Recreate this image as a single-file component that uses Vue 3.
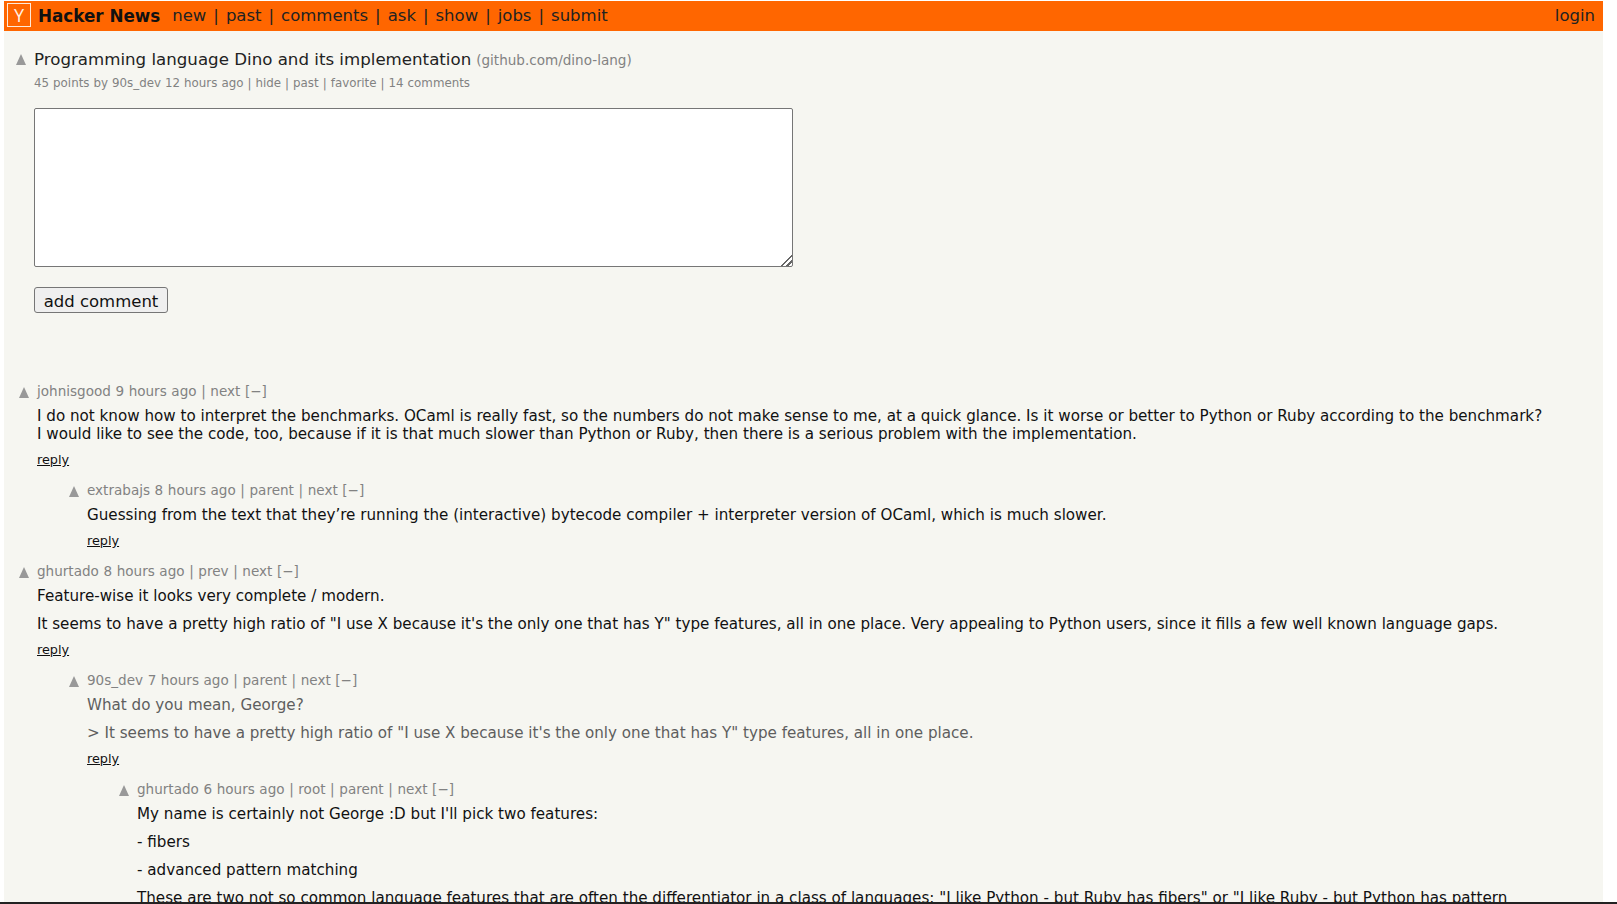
<script setup>
const navLinks = ['new', 'past', 'comments', 'ask', 'show', 'jobs', 'submit']
const subItems = ['hide', 'past', 'favorite', '14 comments']
const comments = [
  { level: 0, user: 'johnisgood', age: '9 hours ago', links: ['next'], paragraphs: ['I do not know how to interpret the benchmarks. OCaml is really fast, so the numbers do not make sense to me, at a quick glance. Is it worse or better to Python or Ruby according to the benchmark? I would like to see the code, too, because if it is that much slower than Python or Ruby, then there is a serious problem with the implementation.'] },
  { level: 1, user: 'extrabajs', age: '8 hours ago', links: ['parent', 'next'], paragraphs: ['Guessing from the text that they’re running the (interactive) bytecode compiler + interpreter version of OCaml, which is much slower.'] },
  { level: 0, user: 'ghurtado', age: '8 hours ago', links: ['prev', 'next'], paragraphs: ['Feature-wise it looks very complete / modern.', 'It seems to have a pretty high ratio of "I use X because it\'s the only one that has Y" type features, all in one place. Very appealing to Python users, since it fills a few well known language gaps.'] },
  { level: 1, user: '90s_dev', age: '7 hours ago', links: ['parent', 'next'], faded: true, paragraphs: ['What do you mean, George?', '> It seems to have a pretty high ratio of "I use X because it\'s the only one that has Y" type features, all in one place.'] },
  { level: 2, user: 'ghurtado', age: '6 hours ago', links: ['root', 'parent', 'next'], paragraphs: ['My name is certainly not George :D but I\'ll pick two features:', '- fibers', '- advanced pattern matching', 'These are two not so common language features that are often the differentiator in a class of languages: "I like Python - but Ruby has fibers" or "I like Ruby - but Python has pattern matching".'] }
]
</script>

<template>
  <div class="page">
    <div class="sheet">
      <header class="topbar">
        <span class="logo">Y</span>
        <b class="brand">Hacker News</b>
        <nav class="nav">
          <template v-for="(link, i) in navLinks" :key="link">
            <span v-if="i" class="sep">|</span><a>{{ link }}</a>
          </template>
        </nav>
        <a class="login">login</a>
      </header>

      <section class="story">
        <div class="title-row">
          <span class="arrow"></span>
          <span class="title">Programming language Dino and its implementation</span>
          <span class="site">(github.com/dino-lang)</span>
        </div>
        <div class="subtext">
          45 points by 90s_dev 12 hours ago<template v-for="item in subItems" :key="item"> | {{ item }}</template>
        </div>
        <textarea class="box"></textarea>
        <button class="add">add comment</button>
      </section>

      <section class="thread">
        <article v-for="c in comments" :key="c.user + c.age" class="comment" :class="'level' + c.level">
          <span class="arrow small"></span>
          <div class="body">
            <div class="meta">{{ c.user }} {{ c.age }}<template v-for="l in c.links" :key="l"> | {{ l }}</template> [−]</div>
            <div class="text" :class="{ faded: c.faded }">
              <p v-for="p in c.paragraphs" :key="p">{{ p }}</p>
            </div>
            <a class="reply">reply</a>
          </div>
        </article>
      </section>
    </div>
    <div class="edge"></div>
  </div>
</template>

<style>
html, body { margin: 0; height: 100%; overflow: hidden; background: #fff; }
</style>

<style scoped>
.page {
  position: relative;
  height: 904px;
  overflow: hidden;
  padding: 1px 14px 0 4px;
  box-sizing: border-box;
  font-family: "DejaVu Sans", Verdana, sans-serif;
  color: #111;
}
.sheet { background: #f6f6f1; height: 100%; }
.topbar {
  height: 30px;
  background: #ff6600;
  display: flex;
  align-items: center;
  padding: 0 8px 2px 3px;
  box-sizing: border-box;
  font-size: 16.5px;
  color: #222;
}
.logo {
  width: 22px;
  height: 22px;
  border: 1px solid #ffe9d9;
  color: #fff2e8;
  display: flex;
  align-items: center;
  justify-content: center;
  font-family: "Open Sans", sans-serif;
  font-size: 18px;
  font-weight: 400;
  margin-right: 7px;
}
.brand { color: #111; margin-right: 12px; font-size: 16.75px; padding-top: 1px; }
.nav { display: flex; }
.sep { margin: 0 7px; }
.login { margin-left: auto; }
.story { padding: 16px 0 0 0; }
.title-row { display: flex; align-items: center; height: 24px; padding-left: 12px; }
.arrow {
  width: 0; height: 0;
  border-left: 5px solid transparent;
  border-right: 5px solid transparent;
  border-bottom: 11px solid #999;
  flex: none;
}
.title { margin-left: 8px; font-size: 16.65px; color: #222; }
.site { margin-left: 5px; padding-top: 2px; font-size: 13.55px; color: #828282; }
.subtext { margin: 4px 0 0 30px; font-size: 11.85px; word-spacing: 0.25px; color: #828282; line-height: 16px; }
.box {
  display: block;
  box-sizing: border-box;
  width: 759px;
  height: 159px;
  margin: 17px 0 0 30px;
  background: #fff;
  border: 1px solid #767676;
  border-radius: 2px;
}
.box::-webkit-resizer {
  background: linear-gradient(135deg, transparent 0 62%, #666 62% 70%, transparent 70% 80%, #666 80% 88%, transparent 88%);
}
.add {
  display: block;
  box-sizing: border-box;
  margin: 20px 0 0 30px;
  width: 134px;
  height: 26px;
  padding: 2px 0 0;
  font: 16.5px "DejaVu Sans", Verdana, sans-serif;
  color: #111;
  background: #efefef;
  border: 1px solid #767676;
  border-radius: 3px;
}
.thread { padding-top: 69px; }
.comment { display: flex; padding-bottom: 13px; }
.level0 { padding-left: 15px; }
.level1 { padding-left: 65px; }
.level2 { padding-left: 115px; }
.arrow.small { margin-top: 5px; }
.body { margin-left: 8px; flex: 1; }
.meta { font-size: 13.55px; word-spacing: 0.3px; line-height: 18px; color: #828282; }
.text { margin: 7px 0 -1px; font-size: 15.15px; line-height: 18px; color: #111; padding-right: 54px; }
.text p { margin: 0 0 10px; }
.text.faded { color: #5e5e5e; }
.reply { display: block; font-size: 12.8px; line-height: 16px; color: #111; text-decoration: underline; }
.edge { position: absolute; left: 0; right: 0; bottom: 0; height: 2px; background: #222; }
</style>
